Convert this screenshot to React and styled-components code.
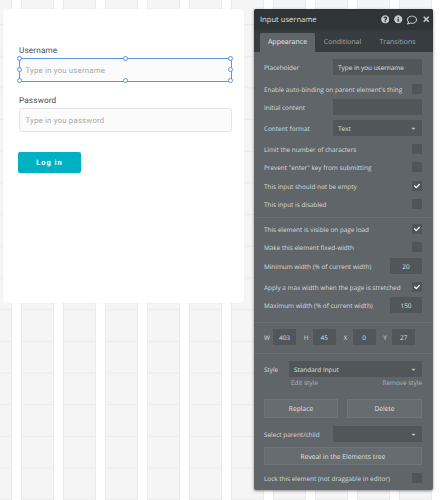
import React from "react";
import styled, { createGlobalStyle } from "styled-components";
import { FaQuestionCircle, FaInfoCircle, FaRegComment, FaTimes, FaCheck, FaCaretDown } from "react-icons/fa";

const GlobalStyle = createGlobalStyle`
  html, body {
    margin: 0;
    padding: 0;
    height: 100%;
  }
  body {
    background-color: #f5f5f5;
    background-image:
      linear-gradient(90deg, transparent 0, transparent 11px, #ebebeb 11px, #ebebeb 12px, #ffffff 12px, #ffffff 21px, #ebebeb 21px, #ebebeb 22px, transparent 22px),
      linear-gradient(0deg, #ebebeb 0, #ebebeb 1px, transparent 1px);
    background-size: 42px 100%, 100% 31.7px;
    background-position: 0 0, 0 25px;
    overflow: hidden;
    text-rendering: geometricPrecision;
  }
`;

const Page = styled.div`
  display: flex;
  align-items: flex-start;
  gap: 10px;
  padding: 9px 0 0 3px;
`;

const Card = styled.div`
  box-sizing: border-box;
  width: 241px;
  height: 294px;
  background: #ffffff;
  border-radius: 2px;
  box-shadow: 0 0 1px rgba(0, 0, 0, 0.18);
  padding: 36px 13px 0 16px;
  font-family: Roboto, "Liberation Sans", sans-serif;
`;

const Label = styled.div`
  font-size: 8.2px;
  line-height: 12px;
  color: #4a4a4a;
  letter-spacing: 0.15px;
  margin-bottom: 1px;
`;

const InputBox = styled.div`
  position: relative;
  box-sizing: border-box;
  width: 213px;
  height: 24px;
  display: flex;
  align-items: center;
  padding: 0 5.5px;
  background: #fbfbfb;
  border-radius: ${(p) => (p.$selected ? "0" : "3px")};
  border: 1px solid ${(p) => (p.$selected ? "#5b93e6" : "#e4e4e4")};
  margin-bottom: ${(p) => p.$mb || 0}px;
  font-size: 7.8px;
  letter-spacing: 0.2px;
  color: #a9a9a9;
`;

const Handle = styled.span`
  position: absolute;
  width: 3px;
  height: 3px;
  background: #ffffff;
  border: 1px solid #5b93e6;
  border-radius: 50%;
  left: ${(p) => p.$x};
  top: ${(p) => p.$y};
  margin: -3px 0 0 -3px;
`;

const LoginButton = styled.button`
  display: block;
  width: 63px;
  height: 21px;
  margin: 20px 0 0 -1px;
  padding: 0;
  border: none;
  border-radius: 2px;
  background: #00b1c4;
  color: #ffffff;
  font-family: Roboto, "Liberation Sans", sans-serif;
  font-size: 7.5px;
  font-weight: 700;
  letter-spacing: 1px;
  text-rendering: geometricPrecision;
`;

const Panel = styled.div`
  width: 179px;
  height: 481px;
  background: #5f6569;
  border-radius: 2px;
  box-shadow: 0 1px 3px rgba(0, 0, 0, 0.45);
  font-family: "Open Sans", "Liberation Sans", sans-serif;
  font-size: 6.4px;
  color: #d9dcde;
  white-space: nowrap;
  overflow: hidden;
`;

const Header = styled.div`
  height: 21px;
  display: flex;
  align-items: center;
  justify-content: space-between;
  padding: 0 3px 0 6px;
  background: #2f3537;
  color: #dfe2e3;
  font-size: 7.6px;
`;

const HeaderIcons = styled.div`
  display: flex;
  align-items: center;
  gap: 5px;
  color: #c5c9cb;
  font-size: 8.5px;
`;

const Bubble = styled(FaRegComment)`
  font-size: 10px;
  margin-left: -1px;
`;

const Tabs = styled.div`
  height: 22px;
  display: flex;
  align-items: flex-end;
  padding-left: 6px;
  background: #363c3f;
`;

const Tab = styled.div`
  box-sizing: border-box;
  height: 19px;
  width: ${(p) => p.$w}px;
  display: flex;
  align-items: center;
  justify-content: center;
  font-size: 7px;
  border-radius: 2px 2px 0 0;
  color: ${(p) => (p.$active ? "#e6e8e9" : "#a3a8ab")};
  background: ${(p) => (p.$active ? "#5f6569" : "transparent")};
`;

const Body = styled.div`
  padding: 7px 11px 0 10px;
`;

const Row = styled.div`
  display: flex;
  align-items: center;
  justify-content: space-between;
  height: ${(p) => p.$h || 18}px;
  margin-top: ${(p) => p.$mt || 0}px;
`;

const Field = styled.div`
  box-sizing: border-box;
  width: ${(p) => p.$w || 89}px;
  height: 16px;
  flex: none;
  display: flex;
  align-items: center;
  justify-content: ${(p) => (p.$center ? "center" : "space-between")};
  padding: ${(p) => (p.$center ? "0" : "0 5px")};
  background: #515659;
  color: #dfe2e3;
`;

const Check = styled.div`
  width: 10px;
  height: 10px;
  flex: none;
  display: flex;
  align-items: center;
  justify-content: center;
  background: #505558;
  color: #ffffff;
  font-size: 6px;
`;

const Divider = styled.div`
  height: 1px;
  margin: ${(p) => p.$my} -11px ${(p) => p.$mb} -10px;
  background: #686e72;
`;

const SizeRow = styled.div`
  display: grid;
  grid-template-columns: repeat(4, 1fr);
  height: 16px;
  margin-right: -1px;
`;

const SizeItem = styled.div`
  display: flex;
  align-items: center;
  justify-content: space-between;
  width: 32px;
`;

const StyleLinks = styled.div`
  display: flex;
  justify-content: space-between;
  height: 9px;
  line-height: 9px;
  margin: 1px 0 0 27px;
  color: #b3b7ba;
`;

const ButtonRow = styled.div`
  display: flex;
  justify-content: space-between;
  margin-top: 12px;
`;

const PanelButton = styled.div`
  box-sizing: border-box;
  width: ${(p) => p.$w}px;
  height: ${(p) => p.$h}px;
  margin-top: ${(p) => p.$mt || 0}px;
  display: flex;
  align-items: center;
  justify-content: center;
  background: #666c70;
  border: 1px solid #6e7478;
  font-size: 6.7px;
  color: #e0e3e4;
`;

const Caret = styled(FaCaretDown)`
  font-size: 7px;
  color: #b9bdc0;
`;

const CheckRow = ({ label, checked, mt }) => (
  <Row $mt={mt}>
    <span>{label}</span>
    <Check>{checked && <FaCheck />}</Check>
  </Row>
);

const Size = ({ name, value }) => (
  <SizeItem>
    <span>{name}</span>
    <Field $w={23} $center>{value}</Field>
  </SizeItem>
);

export default function App() {
  return (
    <>
      <GlobalStyle />
      <Page>
        <Card>
          <Label>Username</Label>
          <InputBox $selected $mb={13}>
            Type in you username
            <Handle $x="0%" $y="0%" />
            <Handle $x="50%" $y="0%" />
            <Handle $x="100%" $y="0%" />
            <Handle $x="0%" $y="50%" />
            <Handle $x="100%" $y="50%" />
            <Handle $x="0%" $y="100%" />
            <Handle $x="50%" $y="100%" />
            <Handle $x="100%" $y="100%" />
          </InputBox>
          <Label>Password</Label>
          <InputBox>Type in you password</InputBox>
          <LoginButton>Log in</LoginButton>
        </Card>

        <Panel>
          <Header>
            <span>Input username</span>
            <HeaderIcons>
              <FaQuestionCircle />
              <FaInfoCircle />
              <Bubble />
              <FaTimes />
            </HeaderIcons>
          </Header>
          <Tabs>
            <Tab $active $w={55}>Appearance</Tab>
            <Tab $w={55}>Conditional</Tab>
            <Tab $w={55}>Transitions</Tab>
          </Tabs>
          <Body>
            <Row $h={16}>
              <span>Placeholder</span>
              <Field>Type in you username</Field>
            </Row>
            <CheckRow label="Enable auto-binding on parent element's thing" mt={5} />
            <Row $h={16} $mt={1}>
              <span>Initial content</span>
              <Field />
            </Row>
            <Row $h={16} $mt={5}>
              <span>Content format</span>
              <Field>Text<Caret /></Field>
            </Row>
            <CheckRow label="Limit the number of characters" mt={4} />
            <CheckRow label={'Prevent "enter" key from submitting'} />
            <CheckRow label="This input should not be empty" checked mt={1} />
            <CheckRow label="This input is disabled" />
            <Divider $my="4px" $mb="2px" />
            <CheckRow label="This element is visible on page load" checked />
            <CheckRow label="Make this element fixed-width" />
            <Row $h={16} $mt={2}>
              <span>Minimum width (% of current width)</span>
              <Field $w={32} $center>20</Field>
            </Row>
            <CheckRow label="Apply a max width when the page is stretched" checked mt={4} />
            <Row $h={16} $mt={1}>
              <span>Maximum width (% of current width)</span>
              <Field $w={32} $center>150</Field>
            </Row>
            <Divider $my="9px" $mb="6px" />
            <SizeRow>
              <Size name="W" value="403" />
              <Size name="H" value="45" />
              <Size name="X" value="0" />
              <Size name="Y" value="27" />
            </SizeRow>
            <Divider $my="8px" $mb="7px" />
            <Row $h={16}>
              <span>Style</span>
              <Field $w={133}>Standard Input<Caret /></Field>
            </Row>
            <StyleLinks>
              <span>Edit style</span>
              <span>Remove style</span>
            </StyleLinks>
            <ButtonRow>
              <PanelButton $w={74} $h={19}>Replace</PanelButton>
              <PanelButton $w={75} $h={19}>Delete</PanelButton>
            </ButtonRow>
            <Row $h={16} $mt={8}>
              <span>Select parent/child</span>
              <Field><span /><Caret /></Field>
            </Row>
            <PanelButton $w={158} $h={18} $mt={5}>Reveal in the Elements tree</PanelButton>
            <CheckRow label="Lock this element (not draggable in editor)" mt={4} />
          </Body>
        </Panel>
      </Page>
    </>
  );
}
